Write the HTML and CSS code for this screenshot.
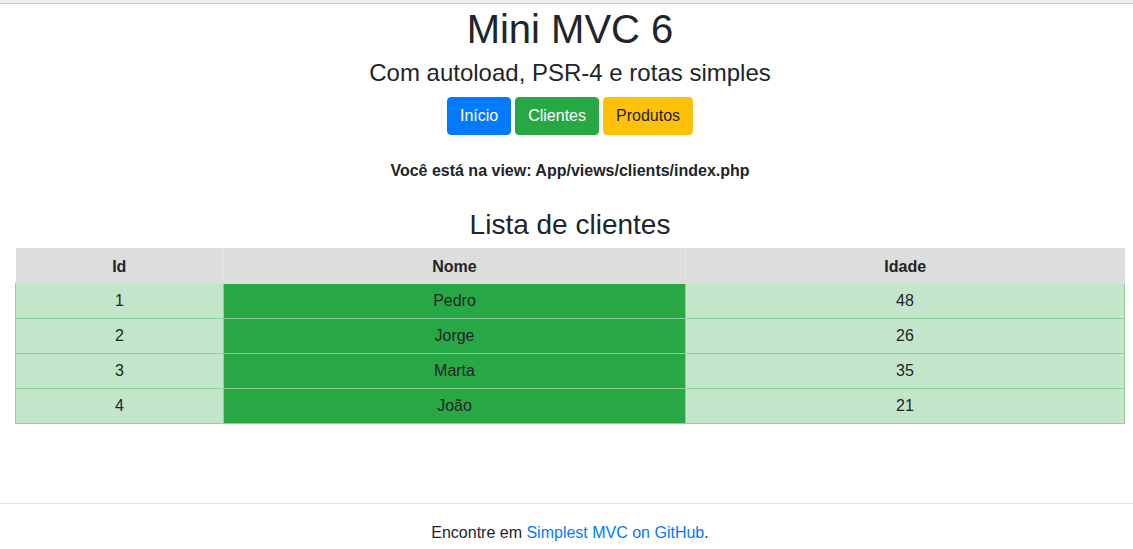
FILE: index.html
```html
<!DOCTYPE html>
<html lang="pt-BR">
<head>
<meta charset="utf-8">
<title>Mini MVC 6</title>
<link rel="stylesheet" href="styles.css">
</head>
<body>
<div class="topbar"></div>
<div class="container">
  <header class="header">
    <h1 class="title">Mini MVC 6</h1>
    <h4 class="subtitle">Com autoload, PSR-4 e rotas simples</h4>
    <nav class="nav">
      <a class="btn btn-primary" href="#">Início</a>
      <a class="btn btn-success" href="#">Clientes</a>
      <a class="btn btn-warning" href="#">Produtos</a>
    </nav>
  </header>
  <p class="view-info">Você está na view: App/views/clients/index.php</p>
  <h3 class="list-title">Lista de clientes</h3>
  <table class="table">
    <thead>
      <tr><th class="col-id">Id</th><th class="col-name">Nome</th><th class="col-age">Idade</th></tr>
    </thead>
    <tbody>
      <tr><td>1</td><td class="name">Pedro</td><td>48</td></tr>
      <tr><td>2</td><td class="name">Jorge</td><td>26</td></tr>
      <tr><td>3</td><td class="name">Marta</td><td>35</td></tr>
      <tr><td>4</td><td class="name">João</td><td>21</td></tr>
    </tbody>
  </table>
</div>
<footer class="footer">
  <p>Encontre em <a href="#">Simplest MVC on GitHub</a>.</p>
</footer>
</body>
</html>
```
FILE: styles.css
```css
* { box-sizing: border-box; }
html { overflow: hidden; }
html, body { margin: 0; padding: 0; }
body {
  width: 1140px;
  font-family: "Liberation Sans", Arial, Helvetica, sans-serif;
  font-size: 16px;
  line-height: 1.5;
  color: #212529;
  background: #fff;
}
.topbar {
  height: 4px;
  background: #ededed;
  border-bottom: 1px solid #c8c8c8;
}
.container { padding: 0 15px; }
.header { text-align: center; padding-top: 1px; }
.title {
  font-size: 40px;
  font-weight: 400;
  line-height: 1.2;
  margin: 0 0 6px;
}
.subtitle {
  font-size: 24px;
  font-weight: 400;
  line-height: 1.2;
  margin: 0 0 9px;
}
.nav {
  display: flex;
  justify-content: center;
  gap: 4px;
}
.btn {
  display: inline-block;
  padding: 6px 12px;
  border: 1px solid transparent;
  border-radius: 4px;
  font-size: 16px;
  line-height: 24px;
  text-decoration: none;
}
.btn-primary { background: #007bff; border-color: #007bff; color: #fff; }
.btn-success { background: #28a745; border-color: #28a745; color: #fff; }
.btn-warning { background: #ffc107; border-color: #ffc107; color: #212529; }
.view-info {
  text-align: center;
  font-weight: 700;
  margin: 24px 0 0;
}
.list-title {
  text-align: center;
  font-size: 28px;
  font-weight: 400;
  line-height: 1.2;
  margin: 25px 0 7px;
}
.table {
  width: 100%;
  border-collapse: collapse;
  table-layout: fixed;
}
.col-id { width: 208px; }
.col-name { width: 462px; }
.table th, .table td {
  text-align: center;
  padding: 4.9px;
  line-height: 24px;
}
.table th {
  background: #dddddd;
  border: 1px solid #e4e4e4;
  border-top: none;
  border-bottom: 2px solid #dddddd;
  font-weight: 700;
  padding: 7px 4.8px 3px;
}
.table th:first-child { border-left: none; }
.table th:last-child { border-right: none; }
.table td {
  background: #c3e6cb;
  border: 1px solid #8fd19e;
}
.table td.name { background: #28a745; }
.footer {
  margin-top: 79px;
  border-top: 1px solid #e5e5e5;
  text-align: center;
}
.footer p { margin: 17px 0 0; }
.footer a { color: #007bff; text-decoration: none; }
```
